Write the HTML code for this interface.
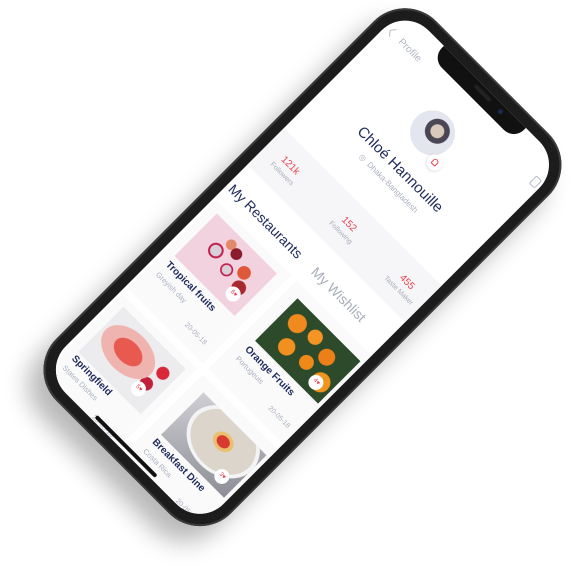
<!DOCTYPE html>
<html><head><meta charset="utf-8"><style>
html,body{margin:0;padding:0;background:#fff;width:573px;height:571px;overflow:hidden;font-family:"Liberation Sans",sans-serif;}
#phone{position:absolute;left:405px;top:-10px;width:247px;height:537px;transform-origin:0 0;transform:rotate(45deg);border-radius:44px;background:#1c1c1c;box-shadow:0 22px 24px rgba(0,0,0,.28),inset 0 0 0 2px #3a3a3a;}
#screen{position:absolute;left:12px;top:12px;width:223px;height:513px;border-radius:33px;background:#fff;overflow:hidden;}
.a{position:absolute;white-space:nowrap;}
.notch{position:absolute;left:55px;top:-2px;width:116px;height:19px;background:#111;border-radius:0 0 14px 14px;}
.band{position:absolute;left:0;top:171px;width:223px;height:52px;background:#f6f6f8;}
.num{color:#e8434f;font-size:10px;text-align:center;width:60px;}
.lab{color:#a8adbb;font-size:7px;text-align:center;width:60px;}
.card{position:absolute;width:106px;height:125px;background:#fafafb;}
.img{position:absolute;width:85px;height:60px;}
.t{color:#1f2a5c;font-size:10px;font-weight:bold;}
.s{color:#aab0bf;font-size:7.5px;}
.d{color:#aab0bf;font-size:7px;}
.h{position:absolute;width:15px;height:15px;border-radius:50%;background:#fff;color:#e8434f;font-size:6px;text-align:center;line-height:15px;}
</style></head><body>
<div id="phone">
 <div id="screen">
  <div class="notch"><div style="position:absolute;left:50px;top:6px;width:22px;height:4px;border-radius:2px;background:#222"></div><div style="position:absolute;left:84px;top:6px;width:5px;height:5px;border-radius:50%;background:#1a2a50"></div></div>
  <svg class="a" style="left:3px;top:21px" width="10" height="12"><path d="M7 1 L3 6 L7 11" stroke="#b7bcc8" stroke-width="1" fill="none"/></svg>
  <div class="a" style="left:20px;top:22px;color:#b0b5c3;font-size:10px">Profile</div>
  <div class="a" style="left:212px;top:26px;width:6px;height:9px;border:1px solid #b7bcc8;border-radius:2px"></div>
  <div class="a" style="left:86px;top:47px;width:45px;height:45px;border-radius:50%;background:radial-gradient(circle at 55% 40%,#d9c8bc 0 18%,#4a4656 20% 33%,#e3e6ee 35%);"></div>
  <div class="a" style="left:123px;top:81px;width:16px;height:16px;border-radius:50%;background:#fff;box-shadow:0 1px 3px rgba(0,0,0,.15)"><div style="position:absolute;left:5px;top:4px;width:6px;height:7px;border:1.5px solid #e8434f;border-radius:3px 3px 1px 1px;box-sizing:border-box"></div></div>
  <div class="a" style="left:44px;top:110px;width:135px;text-align:center;color:#1f2a5c;font-size:15px">Chloé Hannouille</div>
  <div class="a" style="left:58px;top:132px;width:110px;text-align:center;color:#aab0bf;font-size:8px">◎ &nbsp;Dhaka-Bangladesh</div>
  <div class="band"></div>
  <div class="a num" style="left:1px;top:188px">121k</div><div class="a lab" style="left:1px;top:202px">Followers</div>
  <div class="a num" style="left:84px;top:188px">152</div><div class="a lab" style="left:84px;top:202px">Following</div>
  <div class="a num" style="left:166px;top:188px">455</div><div class="a lab" style="left:166px;top:202px">Taste Maker</div>
  <div class="a" style="left:4px;top:242px;color:#1f2a5c;font-size:14px">My Restaurants</div>
  <div class="a" style="left:121px;top:242px;color:#a9aebb;font-size:14px">My Wishlist</div>

  <div class="card" style="left:3px;top:270px"></div>
  <div class="img" style="left:13px;top:279px;background:radial-gradient(circle at 30% 45%,#d8d0d6 0 8%,#c4204e 9% 11%,transparent 12%),radial-gradient(circle at 55% 55%,#d8d0d6 0 8%,#c4204e 9% 11%,transparent 12%),radial-gradient(circle at 50% 25%,#8a1c2c 0 9%,transparent 10%),radial-gradient(circle at 72% 38%,#e0583a 0 9%,transparent 10%),radial-gradient(circle at 80% 62%,#a82830 0 9%,transparent 10%),radial-gradient(circle at 38% 20%,#e08a6a 0 7%,transparent 8%),#f3d2df"></div>
  <div class="h" style="left:74px;top:317px">6♥</div>
  <div class="a t" style="left:13px;top:344px">Tropical fruits</div>
  <div class="a s" style="left:13px;top:359px">Greyish day</div>
  <div class="a d" style="left:69px;top:376px">20-05-18</div>

  <div class="card" style="left:117px;top:270px"></div>
  <div class="img" style="left:130px;top:282px;width:89px;background:radial-gradient(circle at 20% 30%,#f08a1e 0 11%,transparent 12%),radial-gradient(circle at 45% 25%,#f39424 0 11%,transparent 12%),radial-gradient(circle at 70% 35%,#ec7f18 0 11%,transparent 12%),radial-gradient(circle at 30% 70%,#f2901f 0 11%,transparent 12%),radial-gradient(circle at 58% 65%,#ef8a1a 0 11%,transparent 12%),radial-gradient(circle at 85% 72%,#f0941e 0 11%,transparent 12%),#2d4a2a"></div>
  <div class="h" style="left:195px;top:321px">4♥</div>
  <div class="a t" style="left:129px;top:348px">Orange Fruits</div>
  <div class="a s" style="left:129px;top:362px">Portugeuis</div>
  <div class="a d" style="left:187px;top:376px">20-05-18</div>

  <div class="card" style="left:3px;top:403px"></div>
  <div class="img" style="left:13px;top:411px;width:88px;height:64px;background:radial-gradient(ellipse at 40% 45%,#e85a50 0 22%,#f0b4b0 23% 42%,transparent 43%),radial-gradient(circle at 80% 60%,#c2203a 0 8%,transparent 9%),radial-gradient(circle at 85% 30%,#d8283a 0 7%,transparent 8%),#ececee"></div>
  <div class="h" style="left:74px;top:451px">5♥</div>
  <div class="a t" style="left:13px;top:477px">Springfield</div>
  <div class="a s" style="left:13px;top:491px">States Dishes</div>
  <div class="a d" style="left:69px;top:507px">20-05-18</div>

  <div class="card" style="left:117px;top:403px"></div>
  <div class="img" style="left:130px;top:415px;width:89px;background:radial-gradient(ellipse at 55% 35%,#d83a30 0 10%,#e8c070 11% 16%,#dcd5cc 17% 52%,#f4f4f4 53% 58%,transparent 59%),linear-gradient(135deg,#cfcfd4,#8c8d96)"></div>
  <div class="h" style="left:195px;top:454px">3♥</div>
  <div class="a t" style="left:129px;top:479px">Breakfast Dine</div>
  <div class="a s" style="left:129px;top:493px">Costa Rica</div>
  <div class="a d" style="left:187px;top:507px">20-05-18</div>

  <div class="a" style="left:71px;top:506px;width:85px;height:4px;border-radius:2px;background:#111"></div>
 </div>
</div>
</body></html>
